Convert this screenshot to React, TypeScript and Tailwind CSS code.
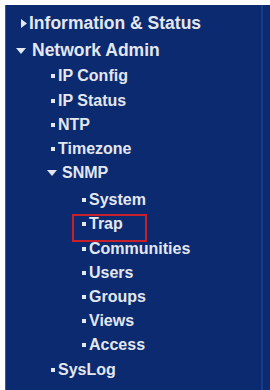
import React from 'react'

type Item = {
  label: string
  level: 0 | 1 | 2
  kind: 'closed' | 'open' | 'leaf'
  selected?: boolean
  gap?: string
}

const items: Item[] = [
  { label: 'Information & Status', level: 0, kind: 'closed' },
  { label: 'Network Admin', level: 0, kind: 'open', gap: 'mt-[2.5px]' },
  { label: 'IP Config', level: 1, kind: 'leaf', gap: 'mt-[1.5px]' },
  { label: 'IP Status', level: 1, kind: 'leaf' },
  { label: 'NTP', level: 1, kind: 'leaf' },
  { label: 'Timezone', level: 1, kind: 'leaf' },
  { label: 'SNMP', level: 1, kind: 'open' },
  { label: 'System', level: 2, kind: 'leaf', gap: 'mt-[3px]' },
  { label: 'Trap', level: 2, kind: 'leaf', selected: true },
  { label: 'Communities', level: 2, kind: 'leaf' },
  { label: 'Users', level: 2, kind: 'leaf' },
  { label: 'Groups', level: 2, kind: 'leaf' },
  { label: 'Views', level: 2, kind: 'leaf' },
  { label: 'Access', level: 2, kind: 'leaf' },
  { label: 'SysLog', level: 1, kind: 'leaf' },
]

function Marker({ kind }: { kind: Item['kind'] }) {
  if (kind === 'closed') {
    return (
      <svg width="6" height="9" viewBox="0 0 6 9" className="shrink-0">
        <path d="M0 0 L6 4.5 L0 9 Z" fill="#e3e7f0" />
      </svg>
    )
  }
  if (kind === 'open') {
    return (
      <svg width="10" height="6" viewBox="0 0 10 6" className="shrink-0">
        <path d="M0 0 L10 0 L5 6 Z" fill="#e3e7f0" />
      </svg>
    )
  }
  return <span className="w-[4px] h-[4px] bg-[#e3e7f0] shrink-0" />
}

const pad: Record<string, string> = {
  '0closed': 'pl-[21px] gap-[2px]',
  '0open': 'pl-[16px] gap-[6px]',
  '1leaf': 'pl-[51px] gap-[3px]',
  '1open': 'pl-[47px] gap-[5px]',
  '2leaf': 'pl-[82px] gap-[3px]',
}

export default function App() {
  return (
    <div className="w-[270px] h-[390px] bg-white pt-[5px] pl-[5px] overflow-hidden">
      <div
        className="h-full flex bg-[#0b2a6f] border-l border-[#3d5a98]"
        style={{ fontFamily: '"Liberation Sans", Arial, sans-serif' }}
      >
        <div className="w-[257px] h-full border-r-[2px] border-[#173d84] pt-[6.9px]">
          {items.map((it) => (
            <div
              key={it.label}
              className={`relative h-[24.2px] flex items-center -ml-[6px] ${it.gap ?? ''} ${
                pad[`${it.level}${it.kind}`]
              }`}
            >
              <Marker kind={it.kind} />
              <span
                className={`text-[#e3e7f0] leading-none whitespace-nowrap font-bold ${
                  it.level === 0 ? 'text-[17.5px]' : 'text-[16px]'
                }`}
              >
                {it.label}
              </span>
              {it.selected && (
                <span className="absolute left-[72px] top-[2px] w-[75px] h-[28px] border-2 border-[#c8202a]" />
              )}
            </div>
          ))}
        </div>
      </div>
    </div>
  )
}
